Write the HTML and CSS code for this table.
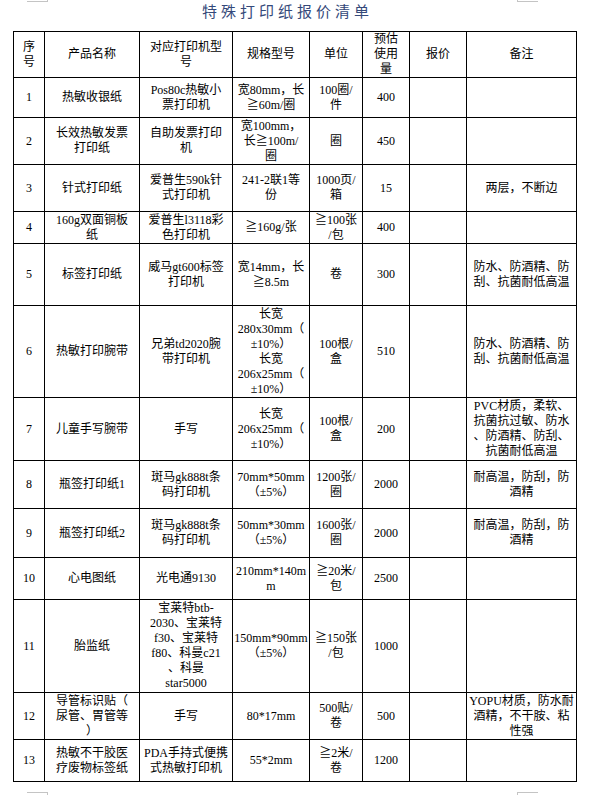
FILE: index.html
```html
<!DOCTYPE html>
<html lang="zh-CN">
<head>
<meta charset="utf-8">
<title>特殊打印纸报价清单</title>
<link rel="stylesheet" href="styles.css">
</head>
<body>
<div class="page">
  <div class="mark mark-tl"></div>
  <div class="mark mark-tr"></div>
  <div class="mark mark-bl"></div>
  <div class="mark mark-br"></div>

  <div class="title">特殊打印纸报价清单</div>

  <table class="sheet">
    <colgroup>
      <col class="c-no">
      <col class="c-name">
      <col class="c-printer">
      <col class="c-spec">
      <col class="c-unit">
      <col class="c-qty">
      <col class="c-price">
      <col class="c-note">
    </colgroup>
    <tbody>
      <tr class="r-head">
        <td>序<br>号</td><td>产品名称</td><td>对应打印机型<br>号</td><td>规格型号</td><td>单位</td><td>预估<br>使用<br>量</td><td>报价</td><td>备注</td>
      </tr>
      <tr class="r1">
        <td>1</td><td>热敏收银纸</td><td>Pos80c热敏小<br>票打印机</td><td>宽80mm，长<br>≧60m/圈</td><td>100圈/<br>件</td><td>400</td><td></td><td></td>
      </tr>
      <tr class="r2">
        <td>2</td><td>长效热敏发票<br>打印纸</td><td>自助发票打印<br>机</td><td>宽100mm，<br>长≧100m/<br>圈</td><td>圈</td><td>450</td><td></td><td></td>
      </tr>
      <tr class="r3">
        <td>3</td><td>针式打印纸</td><td>爱普生590k针<br>式打印机</td><td>241-2联1等<br>份</td><td>1000页/<br>箱</td><td>15</td><td></td><td>两层，不断边</td>
      </tr>
      <tr class="r4">
        <td>4</td><td>160g双面铜板<br>纸</td><td>爱普生l3118彩<br>色打印机</td><td>≧160g/张</td><td>≧100张<br>/包</td><td>400</td><td></td><td></td>
      </tr>
      <tr class="r5">
        <td>5</td><td>标签打印纸</td><td>威马gt600标签<br>打印机</td><td>宽14mm，长<br>≧8.5m</td><td>卷</td><td>300</td><td></td><td>防水、防酒精、防<br>刮、抗菌耐低高温</td>
      </tr>
      <tr class="r6">
        <td>6</td><td>热敏打印腕带</td><td>兄弟td2020腕<br>带打印机</td><td>长宽<br>280x30mm（<br>±10%）<br>长宽<br>206x25mm（<br>±10%）</td><td>100根/<br>盒</td><td>510</td><td></td><td>防水、防酒精、防<br>刮、抗菌耐低高温</td>
      </tr>
      <tr class="r7">
        <td>7</td><td>儿童手写腕带</td><td>手写</td><td>长宽<br>206x25mm（<br>±10%）</td><td>100根/<br>盒</td><td>200</td><td></td><td>PVC材质，柔软、<br>抗菌抗过敏、防水<br>、防酒精、防刮、<br>抗菌耐低高温</td>
      </tr>
      <tr class="r8">
        <td>8</td><td>瓶签打印纸1</td><td>斑马gk888t条<br>码打印机</td><td>70mm*50mm<br>（±5%）</td><td>1200张/<br>圈</td><td>2000</td><td></td><td>耐高温，防刮，防<br>酒精</td>
      </tr>
      <tr class="r9">
        <td>9</td><td>瓶签打印纸2</td><td>斑马gk888t条<br>码打印机</td><td>50mm*30mm<br>（±5%）</td><td>1600张/<br>圈</td><td>2000</td><td></td><td>耐高温，防刮，防<br>酒精</td>
      </tr>
      <tr class="r10">
        <td>10</td><td>心电图纸</td><td>光电通9130</td><td>210mm*140m<br>m</td><td>≧20米/<br>包</td><td>2500</td><td></td><td></td>
      </tr>
      <tr class="r11">
        <td>11</td><td>胎监纸</td><td>宝莱特btb-<br>2030、宝莱特<br>f30、宝莱特<br>f80、科曼c21<br>、科曼<br>star5000</td><td>150mm*90mm<br>（±5%）</td><td>≧150张<br>/包</td><td>1000</td><td></td><td></td>
      </tr>
      <tr class="r12">
        <td>12</td><td>导管标识贴（<br>尿管、胃管等<br>）</td><td>手写</td><td>80*17mm</td><td>500贴/<br>卷</td><td>500</td><td></td><td>YOPU材质，防水耐<br>酒精，不干胺、粘<br>性强</td>
      </tr>
      <tr class="r13">
        <td>13</td><td>热敏不干胶医<br>疗废物标签纸</td><td>PDA手持式便携<br>式热敏打印机</td><td>55*2mm</td><td>≧2米/<br>卷</td><td>1200</td><td></td><td></td>
      </tr>
    </tbody>
  </table>
</div>
</body>
</html>
```

FILE: styles.css
```css
html, body {
  margin: 0;
  padding: 0;
  background: #ffffff;
}

body {
  font-family: "Liberation Serif", "Noto Sans CJK SC", serif;
  color: #000000;
}

.page {
  position: relative;
  width: 594px;
  height: 795px;
  overflow: hidden;
}

/* page crop marks (overlay decoration) */
.mark {
  position: absolute;
  width: 20px;
  height: 20px;
  border-color: #c4c4c4;
  border-style: solid;
  border-width: 0;
}
.mark-tl {
  left: 27px;
  top: -19px;
  border-bottom-width: 1px;
  border-right-width: 1px;
}
.mark-tr {
  left: 517px;
  top: -19px;
  border-bottom-width: 1px;
  border-left-width: 1px;
}
.mark-bl {
  left: 27px;
  top: 792px;
  border-top-width: 1px;
  border-right-width: 1px;
}
.mark-br {
  left: 517px;
  top: 792px;
  border-top-width: 1px;
  border-left-width: 1px;
}

.title {
  height: 31px;
  line-height: 22px;
  font-family: "Noto Sans CJK SC", sans-serif;
  font-size: 15px;
  letter-spacing: 4px;
  color: #34497a;
  text-align: center;
  padding-right: 19px;
  box-sizing: border-box;
}

.sheet {
  margin-left: 13px;
  width: 564px;
  border-collapse: collapse;
  table-layout: fixed;
}

.sheet td {
  border: 1px solid #000000;
  padding: 0;
  text-align: center;
  vertical-align: middle;
  font-size: 12px;
  line-height: 15px;
  white-space: nowrap;
  overflow: visible;
}

.c-no { width: 31px; }
.c-name { width: 95px; }
.c-printer { width: 93px; }
.c-spec { width: 77px; }
.c-unit { width: 53px; }
.c-qty { width: 47px; }
.c-price { width: 57px; }
.c-note { width: 110px; }

.r-head { height: 46px; }
.r1 { height: 40px; }
.r2 { height: 47px; }
.r3 { height: 47px; }
.r4 { height: 32px; }
.r5 { height: 62px; }
.r6 { height: 92px; }
.r7 { height: 63px; }
.r8 { height: 48px; }
.r9 { height: 49px; }
.r10 { height: 42px; }
.r11 { height: 93px; }
.r12 { height: 47px; }
.r13 { height: 42px; }
```
